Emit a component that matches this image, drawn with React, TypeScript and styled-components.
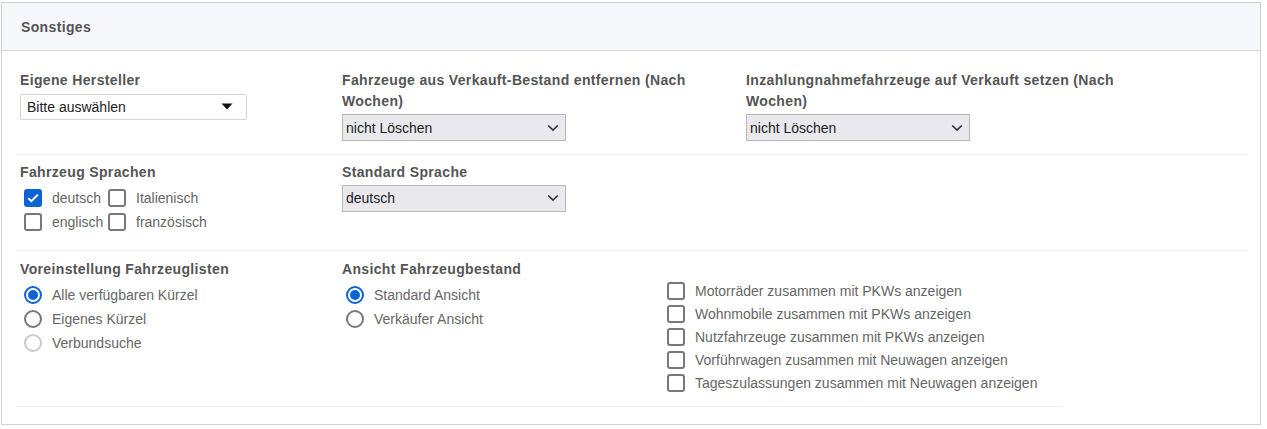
import React from "react";
import styled, { createGlobalStyle } from "styled-components";

const Global = createGlobalStyle`
  html, body { margin: 0; padding: 0; background: #fff; }
  body { font-family: "Liberation Sans", Arial, sans-serif; font-size: 14px; }
  * { box-sizing: border-box; }
`;

const Panel = styled.div`
  margin: 2px 0 0 1px;
  width: 1260px;
  border: 1px solid #d2d2d2;
  background: #fff;
`;

const Header = styled.div`
  height: 48px;
  line-height: 48px;
  padding-left: 19px;
  background: #f6f7fa;
  border-bottom: 1px solid #d6d6d6;
  font-weight: bold;
  font-size: 14px;
  letter-spacing: 0.35px;
  color: #555;
`;

const Body = styled.div`
  padding: 0 12px 17px 14px;
`;

const Section = styled.div<{ $cols: string; $pt: number; $pb: number; $narrow?: boolean }>`
  display: grid;
  grid-template-columns: ${(p) => p.$cols};
  align-items: start;
  padding: ${(p) => p.$pt}px 0 ${(p) => p.$pb}px 4px;
  border-bottom: 1px solid #ececec;
  width: ${(p) => (p.$narrow ? "1047px" : "auto")};
`;

const Field = styled.div<{ $pt?: number }>`
  display: flex;
  flex-direction: column;
  padding-right: 15px;
  padding-top: ${(p) => p.$pt ?? 0}px;
`;

const Label = styled.div<{ $gap?: number }>`
  font-weight: bold;
  font-size: 14px;
  letter-spacing: 0.35px;
  line-height: 20.5px;
  color: #555;
  margin-bottom: ${(p) => p.$gap ?? 4}px;
`;

const SelectBox = styled.div<{ $variant: "white" | "grey"; $w: number }>`
  display: flex;
  align-items: center;
  justify-content: space-between;
  width: ${(p) => p.$w}px;
  height: ${(p) => (p.$variant === "white" ? 26 : 27)}px;
  padding: ${(p) => (p.$variant === "white" ? "0 13px 0 6px" : "0 6px 0 3px")};
  background: ${(p) => (p.$variant === "white" ? "#fff" : "#e9e9ed")};
  border: 1px solid ${(p) => (p.$variant === "white" ? "#d4d4d4" : "#b8b8b8")};
  border-radius: ${(p) => (p.$variant === "white" ? "2px" : "0")};
  color: #222;
  font-size: 14px;
`;

const Caret = () => (
  <svg width="12" height="7" viewBox="0 0 12 7">
    <path d="M0.5 0.5 L11.5 0.5 L6 6.5 Z" fill="#111" />
  </svg>
);

const Chevron = () => (
  <svg width="12" height="8" viewBox="0 0 12 8">
    <path d="M1.2 1.5 L6 6 L10.8 1.5" fill="none" stroke="#333" strokeWidth="1.7" />
  </svg>
);

const OptionGrid = styled.div<{ $cols: string; $row: number }>`
  display: grid;
  grid-template-columns: ${(p) => p.$cols};
  grid-auto-rows: ${(p) => p.$row}px;
`;

const Option = styled.div`
  display: flex;
  align-items: center;
  padding-left: 4px;
  color: #666;
  font-size: 14px;
  white-space: nowrap;
`;

const Box = styled.span<{ $checked?: boolean }>`
  flex: none;
  width: 18px;
  height: 18px;
  margin-right: 10px;
  border-radius: 3px;
  border: 2px solid ${(p) => (p.$checked ? "#0b63d6" : "#787878")};
  background: ${(p) => (p.$checked ? "#0b63d6" : "#fff")};
  display: flex;
  align-items: center;
  justify-content: center;
`;

const Radio = styled.span<{ $checked?: boolean; $disabled?: boolean }>`
  flex: none;
  width: 18px;
  height: 18px;
  margin-right: 10px;
  border-radius: 50%;
  border: 2px solid
    ${(p) => (p.$checked ? "#0b63d6" : p.$disabled ? "#c9c9c9" : "#787878")};
  background: #fff;
  display: flex;
  align-items: center;
  justify-content: center;
  &::after {
    content: "";
    display: ${(p) => (p.$checked ? "block" : "none")};
    width: 10px;
    height: 10px;
    border-radius: 50%;
    background: #0b63d6;
  }
`;

const Check = () => (
  <svg width="12" height="10" viewBox="0 0 12 10">
    <path d="M1.2 5.2 L4.4 8.2 L10.8 1.6" fill="none" stroke="#fff" strokeWidth="2" />
  </svg>
);

const CheckOption = ({ label, checked }: { label: string; checked?: boolean }) => (
  <Option>
    <Box $checked={checked}>{checked && <Check />}</Box>
    {label}
  </Option>
);

const RadioOption = ({
  label,
  checked,
  disabled,
}: {
  label: string;
  checked?: boolean;
  disabled?: boolean;
}) => (
  <Option>
    <Radio $checked={checked} $disabled={disabled} />
    {label}
  </Option>
);

export default function App() {
  return (
    <>
      <Global />
      <Panel>
        <Header>Sonstiges</Header>
        <Body>
          <Section $cols="322px 404px 404px" $pt={19} $pb={13}>
            <Field>
              <Label $gap={3}>Eigene Hersteller</Label>
              <SelectBox $variant="white" $w={227}>
                <span>Bitte auswählen</span>
                <Caret />
              </SelectBox>
            </Field>
            <Field>
              <Label $gap={3}>Fahrzeuge aus Verkauft-Bestand entfernen (Nach Wochen)</Label>
              <SelectBox $variant="grey" $w={224}>
                <span>nicht Löschen</span>
                <Chevron />
              </SelectBox>
            </Field>
            <Field>
              <Label $gap={3}>Inzahlungnahmefahrzeuge auf Verkauft setzen (Nach Wochen)</Label>
              <SelectBox $variant="grey" $w={224}>
                <span>nicht Löschen</span>
                <Chevron />
              </SelectBox>
            </Field>
          </Section>

          <Section $cols="322px 404px 404px" $pt={7} $pb={16}>
            <Field>
              <Label $gap={3}>Fahrzeug Sprachen</Label>
              <OptionGrid $cols="84px auto" $row={24}>
                <CheckOption label="deutsch" checked />
                <CheckOption label="Italienisch" />
                <CheckOption label="englisch" />
                <CheckOption label="französisch" />
              </OptionGrid>
            </Field>
            <Field>
              <Label $gap={2}>Standard Sprache</Label>
              <SelectBox $variant="grey" $w={224}>
                <span>deutsch</span>
                <Chevron />
              </SelectBox>
            </Field>
          </Section>

          <Section $cols="322px 321px 1fr" $pt={8} $pb={11} $narrow>
            <Field>
              <Label $gap={4}>Voreinstellung Fahrzeuglisten</Label>
              <OptionGrid $cols="auto" $row={24}>
                <RadioOption label="Alle verfügbaren Kürzel" checked />
                <RadioOption label="Eigenes Kürzel" />
                <RadioOption label="Verbundsuche" disabled />
              </OptionGrid>
            </Field>
            <Field>
              <Label $gap={4}>Ansicht Fahrzeugbestand</Label>
              <OptionGrid $cols="auto" $row={24}>
                <RadioOption label="Standard Ansicht" checked />
                <RadioOption label="Verkäufer Ansicht" />
              </OptionGrid>
            </Field>
            <Field $pt={21}>
              <OptionGrid $cols="auto" $row={23}>
                <CheckOption label="Motorräder zusammen mit PKWs anzeigen" />
                <CheckOption label="Wohnmobile zusammen mit PKWs anzeigen" />
                <CheckOption label="Nutzfahrzeuge zusammen mit PKWs anzeigen" />
                <CheckOption label="Vorführwagen zusammen mit Neuwagen anzeigen" />
                <CheckOption label="Tageszulassungen zusammen mit Neuwagen anzeigen" />
              </OptionGrid>
            </Field>
          </Section>
        </Body>
      </Panel>
    </>
  );
}
